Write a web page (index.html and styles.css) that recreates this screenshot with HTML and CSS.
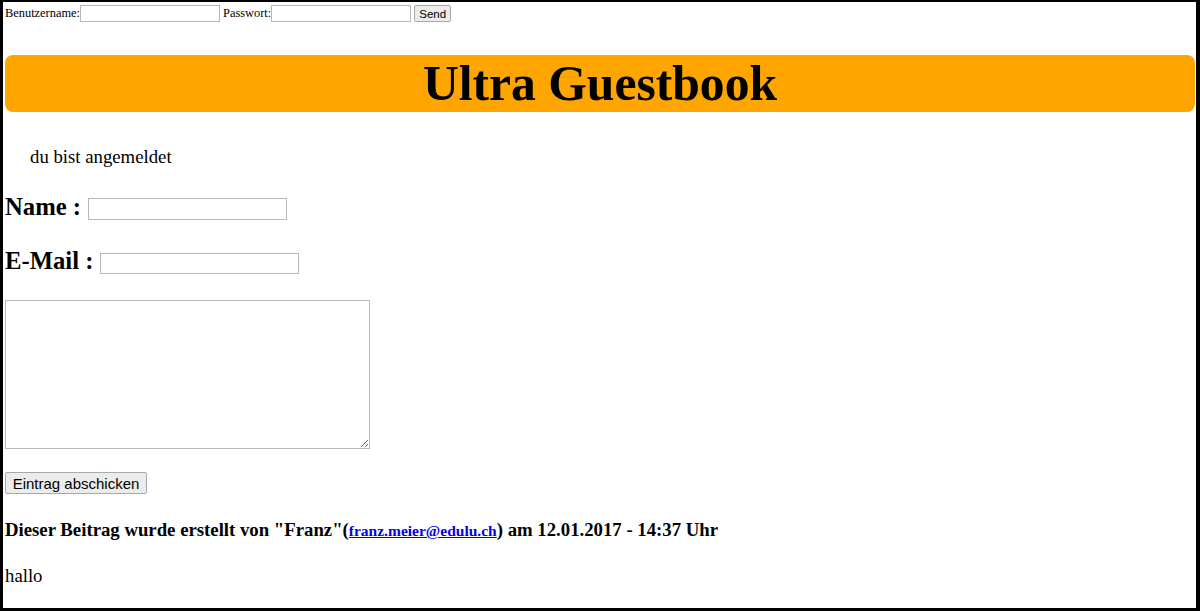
FILE: index.html
```html
<!DOCTYPE html>
<html lang="de">
<head>
<meta charset="utf-8">
<title>Ultra Guestbook</title>
<link rel="stylesheet" href="styles.css">
</head>
<body>
<div class="frame">
  <form class="login">
    <label class="login-label">Benutzername:</label><input class="login-input" type="text">
    <label class="login-label login-gap">Passwort:</label><input class="login-input" type="password">
    <button class="login-send" type="button">Send</button>
  </form>
  <header class="banner">Ultra Guestbook</header>
  <p class="status">du bist angemeldet</p>
  <form class="entry-form">
    <div class="field field-name">
      <span class="field-label">Name :</span><input class="field-input" type="text">
    </div>
    <div class="field field-mail">
      <span class="field-label">E-Mail :</span><input class="field-input" type="text">
    </div>
    <textarea class="message"></textarea>
    <button class="submit" type="button">Eintrag abschicken</button>
  </form>
  <div class="post">
    <h4 class="post-head">Dieser Beitrag wurde erstellt von "Franz"(<a class="post-mail" href="#">franz.meier@edulu.ch</a>) am 12.01.2017 - 14:37 Uhr</h4>
    <p class="post-body">hallo</p>
  </div>
</div>
</body>
</html>
```
FILE: styles.css
```css
html, body {
  margin: 0;
  padding: 0;
  background: #fff;
}
body {
  width: 1200px;
  height: 611px;
  overflow: hidden;
}
.frame {
  box-sizing: border-box;
  width: 1200px;
  height: 611px;
  border-style: solid;
  border-color: #000;
  border-width: 2px 4px 3px 3px;
  padding: 3px 1px 0 2px;
  font-family: "Liberation Serif", "Times New Roman", serif;
  color: #000;
  overflow: hidden;
  display: flex;
  flex-direction: column;
  align-items: flex-start;
}
.login {
  display: flex;
  align-items: center;
  height: 17px;
  margin: 0;
  font-size: 12.4px;
}
.login-label {
  line-height: 17px;
}
.login-gap {
  margin-left: 3px;
}
.login-input {
  box-sizing: border-box;
  width: 140px;
  height: 17px;
  margin: 0;
  padding: 0 2px;
  border: 1px solid #b8b8b8;
  background: #fff;
}
.login-send {
  box-sizing: border-box;
  width: 37px;
  height: 17px;
  margin: 0 0 0 3px;
  padding: 0;
  font-family: "Liberation Sans", Arial, sans-serif;
  font-size: 11.5px;
  color: #000;
  background: #ececec;
  border: 1px solid #a9a9a9;
  border-radius: 2px;
}
.banner {
  align-self: stretch;
  margin-top: 33px;
  height: 57px;
  line-height: 57px;
  background: #ffa500;
  border-radius: 8px;
  text-align: center;
  font-weight: bold;
  font-size: 49.6px;
}
.status {
  margin: 34px 0 0 25px;
  font-size: 18.75px;
}
.entry-form {
  display: flex;
  flex-direction: column;
  align-items: flex-start;
  margin: 0;
}
.field {
  display: flex;
  align-items: center;
  height: 22px;
}
.field-name {
  margin-top: 30px;
}
.field-mail {
  margin-top: 32px;
}
.field-label {
  font-weight: bold;
  font-size: 24.7px;
  line-height: 22px;
  margin-bottom: 4px;
}
.field-input {
  box-sizing: border-box;
  width: 199px;
  height: 22px;
  margin: 0 0 0 7px;
  border: 1px solid #b8b8b8;
  background: #fff;
}
.field-mail .field-input {
  height: 21px;
}
.message {
  box-sizing: border-box;
  width: 365px;
  height: 149px;
  margin-top: 26px;
  border: 1px solid #b8b8b8;
  resize: both;
}
.submit {
  box-sizing: border-box;
  width: 142px;
  height: 22px;
  margin-top: 23px;
  padding: 0;
  font-family: "Liberation Sans", Arial, sans-serif;
  font-size: 15px;
  color: #000;
  background: #ececec;
  border: 1px solid #a9a9a9;
  border-radius: 2px;
}
.post-head {
  margin: 25px 0 0 0;
  font-size: 18.75px;
  font-weight: bold;
}
.post-mail {
  color: #0000ee;
  font-size: 15.5px;
}
.post-body {
  margin: 24px 0 0 0;
  font-size: 18.75px;
}
```
